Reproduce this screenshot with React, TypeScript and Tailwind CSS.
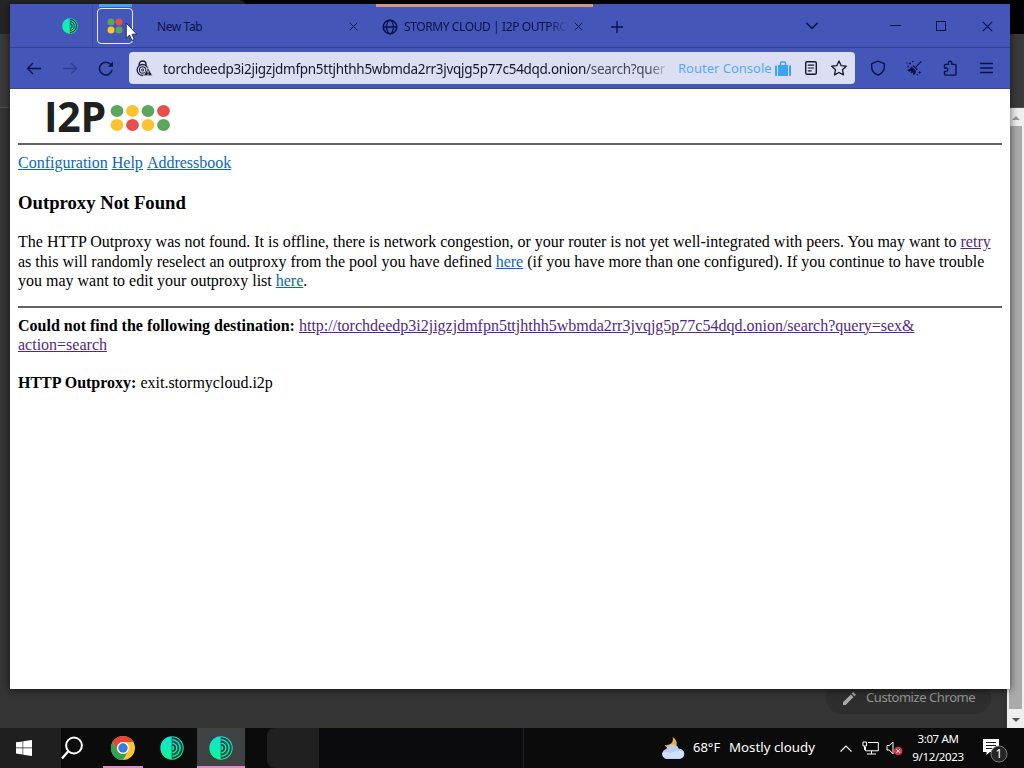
import React from 'react';

type IconProps = {
  className?: string;
};

const DOT_COLORS = ['fill-[#5aa75b]', 'fill-[#fbc32f]', 'fill-[#5aa75b]', 'fill-[#e4504a]', 'fill-[#fbc32f]', 'fill-[#e4504a]', 'fill-[#fbc32f]', 'fill-[#5aa75b]'];

const TorIcon = ({ className }: IconProps) => (
  <svg viewBox="0 0 24 24" className={className}>
    <defs>
      <linearGradient id="tor" x1="0" y1="0" x2="0" y2="1">
        <stop offset="0" stopColor="#12e3d2" />
        <stop offset="1" stopColor="#10f79a" />
      </linearGradient>
    </defs>
    <circle cx="12" cy="12" r="11.7" fill="url(#tor)" />
    <path d="M12 2.2a9.8 9.8 0 0 1 0 19.6M12 5.5a6.5 6.5 0 0 1 0 13M12 8.8a3.2 3.2 0 0 1 0 6.4" fill="none" stroke="#17463f" strokeWidth="1.8" />
    <path d="M12 1v22" stroke="#17463f" strokeWidth=".6" />
  </svg>
);

const ChromeIcon = () => (
  <svg viewBox="0 0 24 24" className="size-6">
    <circle cx="12" cy="12" r="12" fill="#fbc72d" />
    <path d="M1.6 6A12 12 0 0 1 22.4 6H12a6 6 0 0 0-5.2 9z" fill="#e94435" />
    <path d="M1.6 6A12 12 0 0 0 12 24l5.2-9A6 6 0 0 1 6.8 15z" fill="#32a350" />
    <circle cx="12" cy="12" r="6" fill="#fff" />
    <circle cx="12" cy="12" r="4.7" fill="#347be5" />
  </svg>
);

const BackIcon = ({ className }: IconProps) => (
  <svg viewBox="0 0 16 16" className={className} fill="none" stroke="currentColor" strokeWidth="1.4" strokeLinecap="round" strokeLinejoin="round">
    <path d="M14.5 8.5h-13M6.5 3.5l-5 5 5 5" />
  </svg>
);

const ReloadIcon = () => (
  <svg viewBox="0 0 16 16" className="size-4" fill="none" stroke="currentColor" strokeWidth="1.5" strokeLinecap="round">
    <path d="M14 10.4A6.4 6.4 0 1 1 12.9 4.6" />
    <path d="M15 1.6v5.2H9.8z" fill="currentColor" stroke="none" />
  </svg>
);

const CloseIcon = ({ className }: IconProps) => (
  <svg viewBox="0 0 10 10" className={className} stroke="currentColor" fill="none">
    <path d="M.7.7l8.6 8.6M9.3.7L.7 9.3" />
  </svg>
);

// Onion rings inside a padlock, with the insecure-connection triangle
const OnionLockIcon = () => (
  <svg viewBox="0 0 17 17" className="size-[17px] shrink-0" fill="none" stroke="#1d1d38">
    <path d="M3.2 6V4.4a3.4 3.4 0 0 1 6.8 0V6" strokeWidth="1.4" />
    <circle cx="6.6" cy="10" r="5.5" strokeWidth="1.3" />
    <circle cx="6.6" cy="10" r="3.2" strokeWidth="1.1" />
    <circle cx="6.6" cy="10" r="1.1" strokeWidth="1" />
    <path d="M12 7.6l4.6 8.2H7.4z" fill="#1d1d38" stroke="#dcdef4" strokeWidth=".8" />
    <path d="M12 10.5v2.3M12 13.7v1" stroke="#fff" strokeWidth="1" />
  </svg>
);

const GlobeIcon = () => (
  <svg viewBox="0 0 16 16" className="size-4 shrink-0" fill="none" stroke="currentColor" strokeWidth="1.5">
    <circle cx="8" cy="8" r="6.8" />
    <ellipse cx="8" cy="8" rx="3.4" ry="6.8" strokeWidth="1.3" />
    <path d="M1.2 8h13.6" />
  </svg>
);

const SuitcaseIcon = () => (
  <svg viewBox="0 0 16 15" className="h-[15px] w-4 shrink-0" fill="#3aa4f2">
    <path d="M0 4.5h2V15H1a1 1 0 0 1-1-1zM3 4h10v11H3zM14 4.5h2V14a1 1 0 0 1-1 1h-1z" />
    <path d="M5.5 4V2.2A1.2 1.2 0 0 1 6.7 1h2.6a1.2 1.2 0 0 1 1.2 1.2V4" fill="none" stroke="#3aa4f2" strokeWidth="1.5" />
  </svg>
);

const ReaderIcon = () => (
  <svg viewBox="0 0 14 16" className="h-4 w-3.5 shrink-0" fill="none" stroke="currentColor" strokeWidth="1.4" strokeLinecap="round">
    <rect x="1.7" y="1.7" width="10.6" height="12.6" rx="1.4" />
    <path d="M4.3 5.2h5.4M4.3 8h5.4M4.3 10.8h3" strokeWidth="1.2" />
  </svg>
);

const StarIcon = () => (
  <svg viewBox="0 0 16 16" className="size-4 shrink-0" fill="none" stroke="currentColor" strokeWidth="1.3" strokeLinejoin="round">
    <path d="M8 .9l2.1 4.7 5.2.6-3.8 3.6 1 5.1L8 12.5l-4.5 2.4 1-5.1L.7 6.2l5.2-.6z" />
  </svg>
);

const ShieldIcon = () => (
  <svg viewBox="0 0 16 16" className="size-4" fill="none" stroke="currentColor" strokeWidth="1.4" strokeLinejoin="round">
    <path d="M8 1.2l6.3 2.5v3.5c0 3.6-2.6 6.3-6.3 7.9-3.7-1.6-6.3-4.3-6.3-7.9V3.7z" />
  </svg>
);

// Broom with sparkles: new identity
const BroomIcon = () => (
  <svg viewBox="0 0 16 16" className="size-4" fill="currentColor">
    <path d="M14.9 1l.8.8-5.3 5.5-.8-.8z" />
    <path d="M7.3 5.1l4.4 4.2-.8.9-4.4-4.2z" />
    <path d="M5.6 6.6l4.5 4.3c-.3 2-1.3 3.4-2.5 4.2l-.9-1 .6-2-1.8 1.3-.9-.8.9-1.9-2 1.1L1 10c2.1-.5 3.7-1.6 4.6-3.4z" />
    <circle cx="4" cy="3.4" r="1" />
    <circle cx="6.7" cy="1.5" r=".8" />
    <circle cx="1" cy="3" r=".7" />
    <circle cx="2" cy="6.4" r=".8" />
    <path d="M13.8 10.6l.5 1.3 1.3.5-1.3.5-.5 1.3-.5-1.3-1.3-.5 1.3-.5z" />
    <circle cx="11.3" cy="14.8" r=".7" />
  </svg>
);

const PuzzleIcon = () => (
  <svg viewBox="0 0 16 16" className="size-4" fill="none" stroke="currentColor" strokeWidth="1.4" strokeLinejoin="round">
    <path d="M2.5 7V5.3a.9.9 0 0 1 .9-.9h3V3a1.7 1.7 0 0 1 3.4 0v1.4h3.3a.9.9 0 0 1 .9.9v8.9a.9.9 0 0 1-.9.9H3.4a.9.9 0 0 1-.9-.9v-2.8h1.6a1.7 1.7 0 0 0 0-3.4H2.5V7z" />
  </svg>
);

const WeatherIcon = () => (
  <svg viewBox="0 0 25 24" className="h-6 w-[25px] shrink-0">
    <path d="M11.4.8c2 4-1.2 9.2-7.7 8.2 1.8 3.8 6 5 9.3 3.3 3.9-2 4-7.9-1.6-11.5z" fill="#f5ac2e" />
    <path d="M6 22.8a5 5 0 0 1-.7-9.8 6.7 6.7 0 0 1 12.5-.2 5 5 0 0 1 1 10z" fill="#b9cef0" />
    <path d="M6 22.8a5 5 0 0 1-4.7-6.3c3-1.7 6 .7 8.5.3 4.2-.8 7.4-3.5 12.6-1.2a5 5 0 0 1-3.6 7.2z" fill="#d1e0f7" />
  </svg>
);

const TabStrip = () => (
  <div className="relative flex h-[44px] shrink-0 items-start border-b border-[#354397] text-xs">
    <div className="flex h-[43px] w-[83px] justify-end border-r border-[#3a4ca6] pr-[14px] pt-[14px]">
      <TorIcon className="size-4" />
    </div>
    <div className="flex w-[44px] flex-col items-center">
      <div className="h-[3px] w-[33px] bg-[#42a4ec]" />
      <div className="mt-px flex size-9 items-center justify-center rounded border border-[#e7eafc]">
        <svg viewBox="0 0 16 16" className="size-4">
          <circle cx="4" cy="4" r="3.5" className="fill-[#5aa75b]" />
          <circle cx="12" cy="4" r="3.5" className="fill-[#e4504a]" />
          <circle cx="4" cy="12" r="3.5" className="fill-[#fbc32f]" />
          <circle cx="12" cy="12" r="3.5" className="fill-[#5aa75b]" />
        </svg>
      </div>
    </div>
    <div className="flex h-[45px] w-[239px] items-center justify-between pl-5 pr-[18px]">
      <span className="tracking-[-0.4px]">New Tab</span>
      <CloseIcon className="size-[9px]" />
    </div>
    <div className="flex h-[43px] w-[217px] items-center border-t-[3px] border-[#d0987f] pb-px pl-1.5 pr-[9px]">
      <GlobeIcon />
      <span className="ml-[6px] w-[164px] whitespace-nowrap tracking-[-0.4px] [mask-image:linear-gradient(to_right,black_88%,transparent)]">
        STORMY CLOUD | I2P OUTPRO
      </span>
      <CloseIcon className="ml-[6px] size-[9px] shrink-0" />
    </div>
    <svg viewBox="0 0 12 12" className="ml-[18px] mt-[17px] size-3" stroke="currentColor" strokeWidth="1.3">
      <path d="M6 0v12M0 6h12" />
    </svg>
    <svg viewBox="0 0 12 8" className="ml-[183px] mt-[18px] h-2 w-3" fill="none" stroke="currentColor" strokeWidth="1.5">
      <path d="M.5 1L6 6.5 11.5 1" />
    </svg>
    <div className="ml-[72px] mt-[21px] h-px w-[11px] bg-[#0b1248]" />
    <div className="ml-[35px] mt-[17px] size-2.5 border border-[#0b1248]" />
    <CloseIcon className="ml-9 mt-[17px] size-[11px]" />
    <svg viewBox="0 0 14 21" className="absolute left-[115px] top-[18px] h-[21px] w-3.5">
      <path d="M1.2 1v15.2l3.4-3.1 2.3 5.4 2.5-1.1-2.3-5.2h4.8z" fill="#fff" stroke="#23284f" />
    </svg>
  </div>
);

const Toolbar = () => (
  <div className="flex h-[41px] shrink-0 items-center border-b border-[#3d4788]">
    <BackIcon className="ml-4 size-4" />
    <BackIcon className="ml-5 size-4 -scale-x-100 opacity-35" />
    <div className="ml-5">
      <ReloadIcon />
    </div>
    <div className="ml-[15px] flex h-8 w-[726px] items-center rounded bg-[#dcdef4] pl-[7px] pr-2 text-[#15152e]">
      <OnionLockIcon />
      <span className="ml-[10px] mt-0.5 w-[506px] shrink-0 whitespace-nowrap text-[13.5px] tracking-[-0.29px] [mask-image:linear-gradient(to_right,black_96%,transparent)]">
        torchdeedp3i2jigzjdmfpn5ttjhthh5wbmda2rr3jvqjg5p77c54dqd.onion<span className="text-[#45455f]">/search?quer</span>
      </span>
      <span className="ml-[9px] mt-0.5 w-[97px] whitespace-nowrap text-[13px] text-[#55acee]">Router Console</span>
      <SuitcaseIcon />
      <div className="ml-[13px] flex gap-[13px]">
        <ReaderIcon />
        <StarIcon />
      </div>
    </div>
    <div className="ml-[15px] flex gap-5">
      <ShieldIcon />
      <BroomIcon />
      <PuzzleIcon />
      <svg viewBox="0 0 16 16" className="size-4" stroke="currentColor" strokeWidth="1.3" strokeLinecap="round">
        <path d="M2.5 3.5h12M2.5 8h12M2.5 12.5h12" />
      </svg>
    </div>
  </div>
);

const ErrorPage = () => (
  <main className="flex-1 bg-white px-2 font-['Liberation_Serif','Times_New_Roman',serif] text-[16px] leading-[19.4px] text-black">
    <div className="flex h-[56px] items-start border-b-2 border-[#626262] pl-[26px] pt-[9px]">
      <span className="w-[66px] whitespace-nowrap font-['Open_Sans','Noto_Sans',sans-serif] text-[41px] font-bold leading-[37px] tracking-[-0.2px] text-[#202020]">I2P</span>
      <svg viewBox="0 0 62 30" className="mt-[5px] h-[30px] w-[62px]">
        {DOT_COLORS.map((color, i) => (
          <ellipse key={i} cx={7 + (i % 4) * 15.5} cy={i < 4 ? 8 : 22} rx="6.4" ry="6.1" className={color} />
        ))}
      </svg>
    </div>
    <nav className="mt-[8px] flex gap-1 text-[#0b66b8]">
      <a className="underline">Configuration</a>
      <a className="underline">Help</a>
      <a className="underline">Addressbook</a>
    </nav>
    <h3 className="mt-[20px] text-[18.7px] font-bold leading-[22px]">Outproxy Not Found</h3>
    <p className="mt-[18px] whitespace-nowrap">
      The HTTP Outproxy was not found. It is offline, there is network congestion, or your router is not yet well-integrated with peers. You may want to <a className="text-[#512b83] underline">retry</a>
      <br />
      as this will randomly reselect an outproxy from the pool you have defined <a className="text-[#0b66b8] underline">here</a> (if you have more than one configured). If you continue to have trouble
      <br />
      you may want to edit your outproxy list <a className="text-[#0b66b8] underline">here</a>.
    </p>
    <hr className="mt-[15px] border-t-2 border-[#626262]" />
    <p className="mt-[8px] whitespace-nowrap">
      <b>Could not find the following destination:</b>{' '}
      <a className="text-[#512b83] underline">
        http://torchdeedp3i2jigzjdmfpn5ttjhthh5wbmda2rr3jvqjg5p77c54dqd.onion/search?query=sex&amp;
        <br />
        action=search
      </a>
    </p>
    <p className="mt-[19px]">
      <b>HTTP Outproxy:</b> exit.stormycloud.i2p
    </p>
  </main>
);

const Taskbar = () => (
  <footer className="flex h-10 items-center bg-[#0b0b0b] font-['Noto_Sans','Open_Sans',sans-serif] text-white">
    <div className="flex h-10 w-[61px] items-center bg-[#1f1f1f] pl-4">
      <svg viewBox="0 0 16 16" className="size-4" fill="#fff">
        <path d="M0 2.3L6.6 1.4v6.2H0zM7.2 1.3L16 0v7.6H7.2zM0 8.2h6.6v6.3L0 13.6zM7.2 8.2H16V16l-8.8-1.3z" />
      </svg>
    </div>
    <svg viewBox="0 0 24 24" className="-mt-px size-6" fill="none" stroke="#fff" strokeWidth="2">
      <circle cx="13" cy="9.5" r="7.9" />
      <path d="M7.5 15.1L1 22.5" strokeWidth="2.3" />
    </svg>
    <div className="ml-[18px] flex h-10 w-10 justify-center border-b-2 border-[#df8ac6] pt-2">
      <ChromeIcon />
    </div>
    <div className="ml-[5px] flex h-10 w-12 justify-center pt-2">
      <TorIcon className="size-6" />
    </div>
    <div className="ml-px flex h-10 w-12 justify-center border-b-2 border-[#df8ac6] bg-[#404143] pt-2">
      <TorIcon className="size-6" />
    </div>
    <div className="flex h-10 flex-1 pl-[22px]">
      <div className="h-10 w-[52px] rounded-l-lg bg-[#202020]" />
      <div className="h-10 w-[205px] border-r border-[#252525] bg-[#0b0b0d]" />
    </div>
    <WeatherIcon />
    <div className="ml-[7px] flex h-10 items-center">
      <span className="w-9 whitespace-nowrap text-[13px]">68°F</span>
      <span className="w-[111px] whitespace-nowrap text-[13.3px]">Mostly cloudy</span>
    </div>
    <svg viewBox="0 0 12 7" className="h-[7px] w-3" fill="none" stroke="#fff" strokeWidth="1.2">
      <path d="M.5 6.5L6 1l5.5 5.5" />
    </svg>
    <svg viewBox="0 0 17 14" className="ml-2.5 h-3.5 w-[17px]" fill="none" stroke="#fff">
      <path d="M6 1.5h10.3v8.3H3.5V6M5 13h9M9.5 10v3M1 1h3.5v4H1zM2.5 5v4" />
    </svg>
    <svg viewBox="0 0 17 16" className="ml-[7px] h-4 w-[17px]" fill="none" stroke="#fff">
      <path d="M1 5.5h2.3L7 2v12L3.3 10H1z" />
      <circle cx="12.2" cy="11" r="4.3" fill="#d33a47" stroke="none" />
      <path d="M10.5 9.3l3.4 3.4M13.9 9.3l-3.4 3.4" />
    </svg>
    <div className="ml-[6px] w-[58px] whitespace-nowrap text-center text-[11.5px] leading-[18px] tracking-[-0.35px]">
      <div>3:07 AM</div>
      <div>9/12/2023</div>
    </div>
    <svg viewBox="0 0 26 26" className="ml-[15px] mr-4 mt-1.5 size-[26px]">
      <path d="M1 1h16v13h-9l-3.5 3V14H1z" fill="#fff" />
      <path d="M4 4.5h10M4 7.5h10M4 10.5h6" stroke="#202020" />
      <circle cx="17" cy="16" r="8" fill="#242424" stroke="#777" />
      <text x="17" y="20" textAnchor="middle" fontSize="12" fill="#fff">1</text>
    </svg>
  </footer>
);

const BrowserWindow = () => (
  <section className="absolute left-[10px] top-1 flex h-[685px] w-[1000px] flex-col overflow-hidden bg-[#4456b7] font-['Noto_Sans','Open_Sans',sans-serif] text-[#0b1248] shadow-[0_1px_8px_rgba(0,0,0,0.65)]">
    <TabStrip />
    <Toolbar />
    <ErrorPage />
  </section>
);

const App = () => (
  <div className="relative flex h-[768px] w-[1024px] flex-col overflow-hidden bg-[#353535]">
    <div className="h-[34px] bg-black">
      <div className="h-[34px] w-[247px] rounded-r-lg bg-[#252525]" />
    </div>
    <div className="h-[74px] border-b border-[#515151] bg-[#3a3a3a]" />
    <div className="flex flex-1">
      <div className="flex flex-1 items-end justify-end pb-[14px] pr-4">
        <div className="flex h-8 w-[165px] items-center rounded-full bg-[#2e2e2e] pl-4 font-['Noto_Sans','Open_Sans',sans-serif] text-[13px] text-[#949494]">
          <svg viewBox="0 0 13 13" className="ml-px mr-2.5 size-[13px]" fill="#aaa">
            <path d="M0 10.2L7.8 2.4l2.7 2.7L2.7 13H0zM8.6 1.6L10.2 0 13 2.7l-1.7 1.6z" />
          </svg>
          <span className="whitespace-nowrap tracking-[-0.43px]">Customize Chrome</span>
        </div>
      </div>
      <div className="flex w-[17px] flex-col items-center justify-between bg-[#efefef] py-1.5">
        <svg viewBox="0 0 8 4" className="mt-[2px] h-1 w-2" fill="#999">
          <path d="M0 4l4-4 4 4z" />
        </svg>
        <div className="mb-[9px] mt-[6px] w-[13px] flex-1 bg-[#aaa]" />
        <svg viewBox="0 0 8 4" className="h-1 w-2" fill="#555">
          <path d="M0 0l4 4 4-4z" />
        </svg>
      </div>
    </div>
    <Taskbar />
    <BrowserWindow />
  </div>
);

export default App;
